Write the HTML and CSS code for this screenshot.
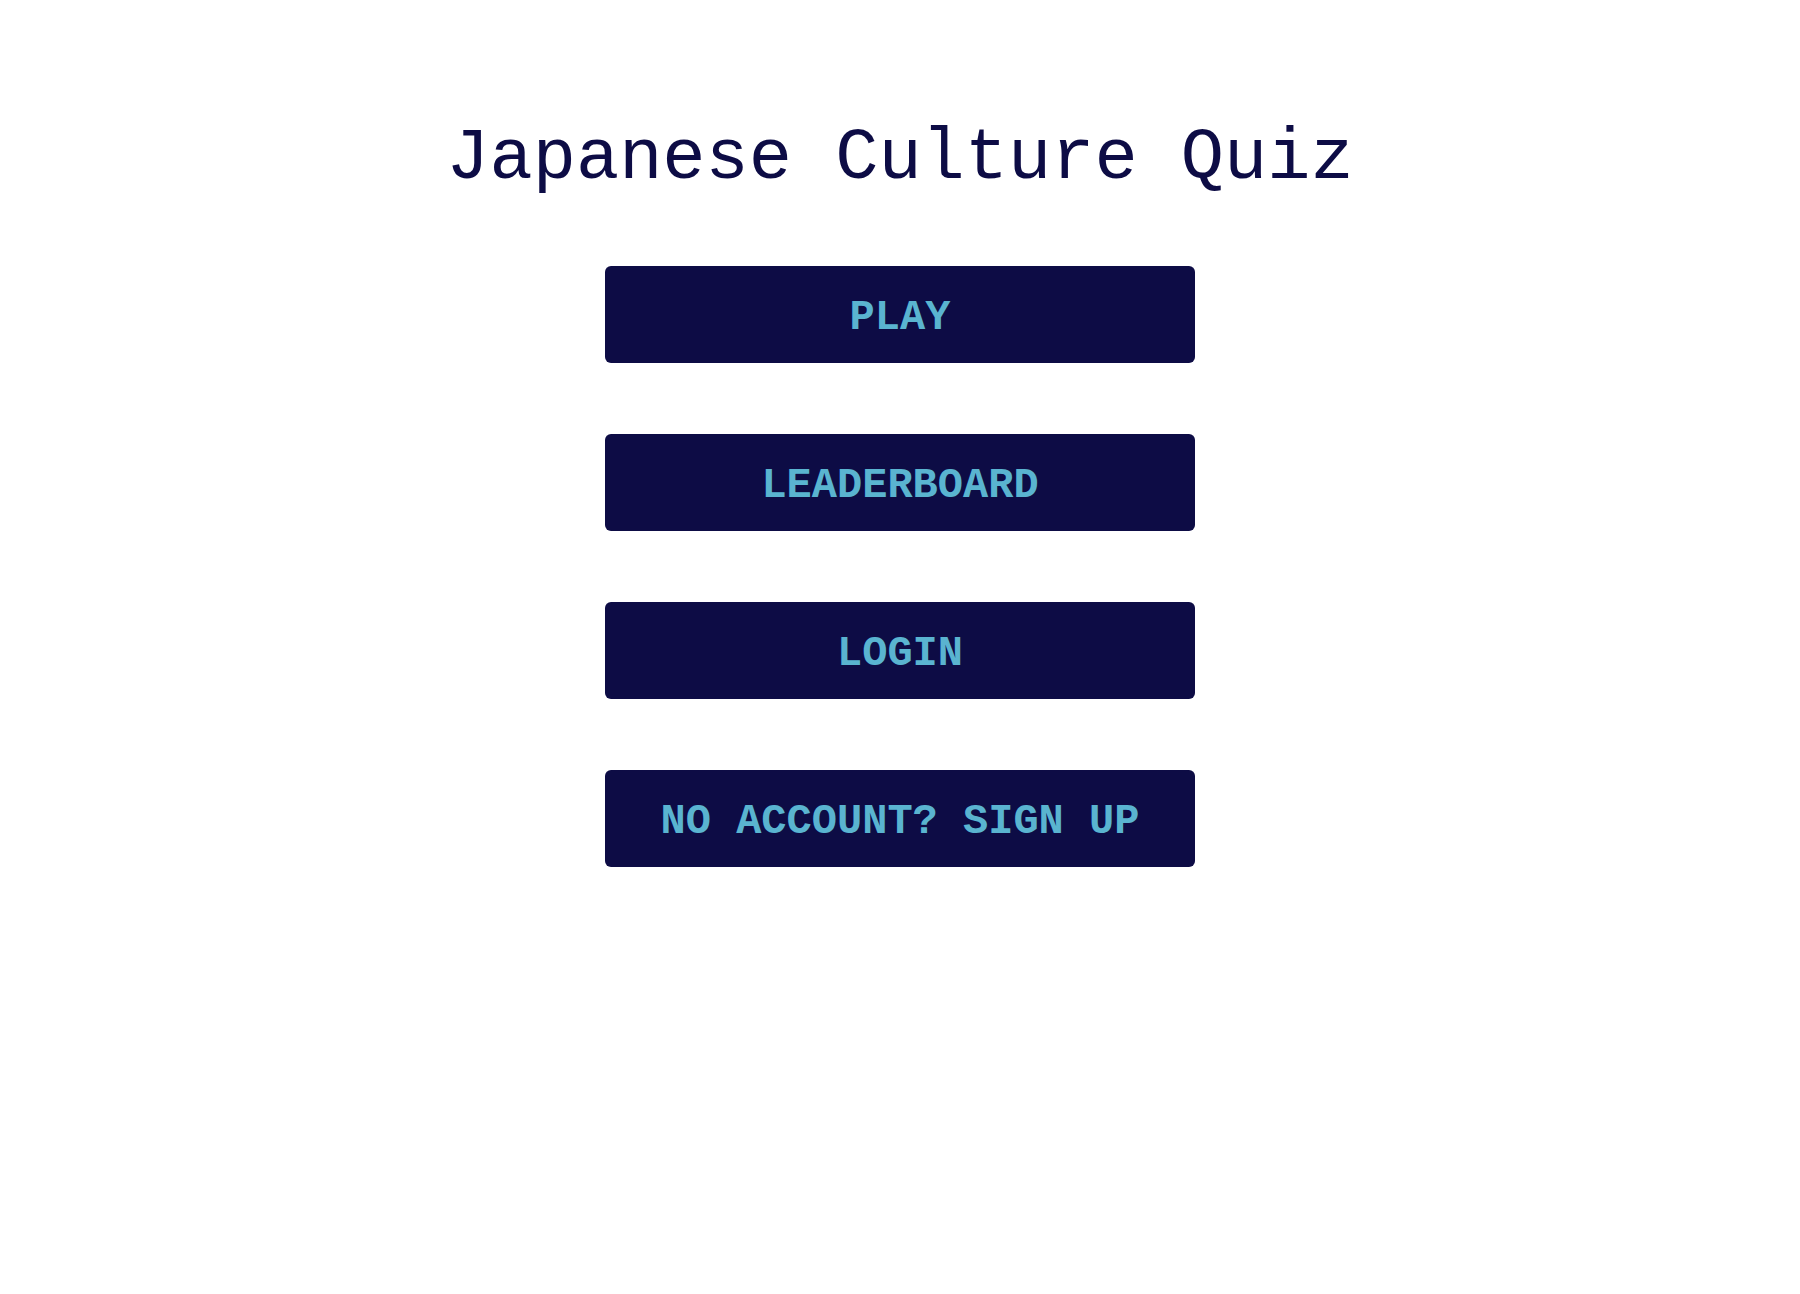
FILE: index.html
```html
<!DOCTYPE html>
<html>
<head>
<meta charset="utf-8">
<link rel="stylesheet" href="styles.css">
</head>
<body>
<main class="home">
  <h1 class="title">Japanese Culture Quiz</h1>
  <nav class="menu">
    <button class="btn">PLAY</button>
    <button class="btn">LEADERBOARD</button>
    <button class="btn">LOGIN</button>
    <button class="btn">NO ACCOUNT? SIGN UP</button>
  </nav>
</main>
</body>
</html>
```
FILE: styles.css
```css
html, body {
  margin: 0;
  padding: 0;
  background: #ffffff;
}
.home {
  display: flex;
  flex-direction: column;
  align-items: center;
  padding-top: 118px;
  font-family: "Courier New", "Nimbus Mono PS", "Nimbus Mono L", "FreeMono", "Courier 10 Pitch", Courier, "Liberation Mono", monospace;
}
.title {
  margin: 0;
  font-size: 72px;
  font-weight: normal;
  color: #0d0c45;
  line-height: 82px;
}
.menu {
  display: flex;
  flex-direction: column;
  gap: 71px;
  margin-top: 66px;
}
.btn {
  width: 590px;
  height: 97px;
  border: none;
  border-radius: 6px;
  background: #0d0c45;
  color: #5ab4d0;
  font-family: "Courier New", "Nimbus Mono PS", "Nimbus Mono L", "FreeMono", "Courier 10 Pitch", Courier, "Liberation Mono", monospace;
  font-weight: bold;
  font-size: 42px;
  padding: 6px 0 0;
}
```
